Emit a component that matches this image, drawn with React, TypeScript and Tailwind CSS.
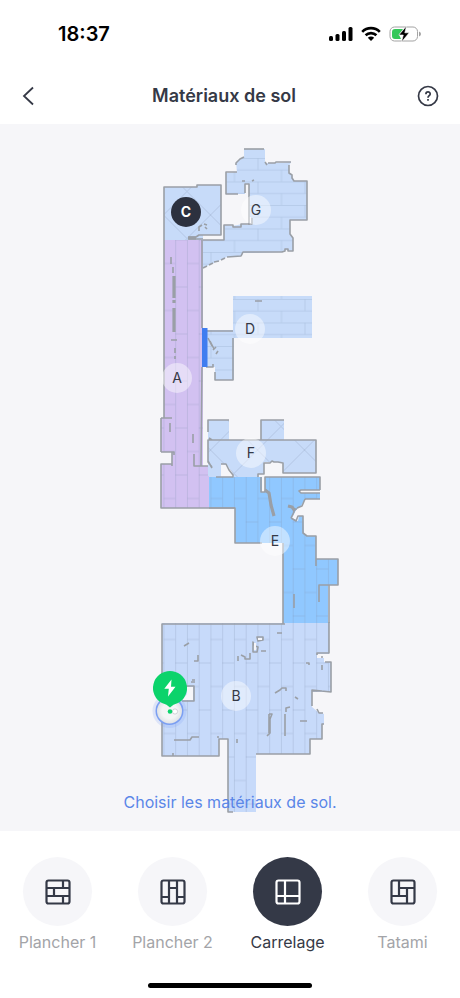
import React, { useState } from 'react';
import clsx from 'clsx';

const MAP = { top: 124, width: 460, height: 707 };

const rooms = [
  { id: 'A', x: 177, y: 378 },
  { id: 'B', x: 236, y: 696 },
  { id: 'C', x: 186, y: 212 },
  { id: 'D', x: 250, y: 329 },
  { id: 'E', x: 275, y: 541 },
  { id: 'F', x: 251, y: 453 },
  { id: 'G', x: 256, y: 210 },
];

const areas = [
  {
    id: 'G',
    color: '#c7dbf9',
    pattern: 'url(#rows)',
    d: 'M244 149H265V163L275 163L291 162L289 166V173L292 175L294 181H307V220H290V234L293 238V251L286 250L282 252L243 253L242 256L227 257L218 261L207 266L203 268V240H224V225L233 226L242 224L251 225V217H249V184H245V194H226V173L237 172L236 162L244 157Z',
  },
  {
    id: 'C',
    color: '#c7dbf9',
    pattern: 'url(#diamonds)',
    d: 'M164 187H197V185H221V235H203V240H164Z',
  },
  {
    id: 'D',
    color: '#c7dbf9',
    pattern: 'url(#rows)',
    d: 'M233 296H312V338H234V380H215V367H205V330H233Z',
  },
  {
    id: 'F',
    color: '#c7dbf9',
    pattern: 'url(#diamonds)',
    d: 'M208 420H229V440H261V420H284V440H316V473H283V462H264V474H258V477H234L232 472L227 465L221 464V477H208V440Z',
  },
  {
    id: 'A',
    color: '#d2c1f1',
    pattern: 'url(#columns)',
    d: 'M164 240H203V466H208V476H209V508H161V464H172V452H161V418H164Z',
  },
  {
    id: 'E',
    color: '#90c8ff',
    pattern: 'url(#columns)',
    d: 'M209 477H262V492H265V477H320V490H300V493H320V499H305L301 506L296 510L292 518L298 521L299 516H303L304 533L307 536H316V559H338V585H328V623H283V543H235V508H209Z',
  },
  {
    id: 'B',
    color: '#c7dafa',
    pattern: 'url(#columns)',
    d: 'M162 623H329V654H317V658H324V662H331V692H312V707L318 712L324 714V724H322V739H310V754H256V812H228V739H219V756H162Z',
  },
];

const walls = [
  // G
  'M244 149H264',
  'M265 162L267 165M268 163L275 163L276 162H291M289 165V173L292 175V178L294 181H307V220H290V234L293 238V251H288V249H285V251L282 252H243L241 256L227 257M225 258L221 260M219 261L214 262M213 263L209 265M207 266L203 268',
  'M244 157L240 159L236 163V165M237 172H226V194H238M245 193V184H249V225M242 181H245M252 181L254 180',
  'M203 240H224V225H233V227H241V224H252V218',
  // C
  'M164 240V187H197V185H221V235H199L196 237H189V239H203',
  'M199 231V227L202 225M204 224L207 225M205 227L207 229',
  // A
  'M164 240V418M161 418H172M161 418V452M161 452H174V455M172 452V466M172 464H161V508H235',
  'M202 240V328M202 367L201 466H208M194 454V466H208M170 423V432M193 434V443',
  'M171 257V264M173 267V273M171 340H177M175 348V353M175 356V359',
  // D
  'M207 331H233M233 338V380H215V372M206 367H213V364M208 338L212 346M210 341L214 349M213 350L216 347M216 354L218 351M255 301H262',
  // F
  'M208 432V420H229M209 438L212 440M284 420H261V440M212 467L208 462V440H316V473H283V463L278 462H274L272 461L270 463H264V474H258V477M208 461L212 468M221 464H226L229 470L233 475V477H216',
  // E
  'M261 477V492H265V477H320V490M320 490H301L299 491L301 493H320M320 499H305M305 499L302 506L297 508M297 509H294V512L291 518M291 518L296 521L298 516H303V533L307 536H316V566M316 559H338V585H319V602M329 585V623',
  'M209 508H235V543H262M283 543V624M294 594V608',
  // B
  'M162 688V624H285M329 622V653H317V655M325 662H331V692L312 690V706M312 691H322M317 709L319 713H323M324 714M324 724H322V739H310V754H256M323 657H321M322 665V670',
  'M162 722V756H219V739H228V812H233M217 737H219',
  'M186 686H194V701H182M198 655V661H194M184 646L189 643M257 637H263V640L258 641ZM253 642V652H257L258 647L255 646ZM261 651H266M238 656V661M241 655L245 657V659H250V653M277 633H282M306 663H309V665',
  'M275 693L280 690L282 688H286V691M295 697L298 699M286 712V708L290 707M269 714H272L270 719V733L267 736M269 714V733M285 714V736M300 721H307M174 740H190L192 737H199M237 739V743M173 753V756M191 682H195M192 680H195',
];

const thickWalls = [
  'M174 276V298M174 300V303M174 308V332',
  'M265 490L269 493L271 505L274 516',
  'M288 506L292 507L295 511',
  'M188 238H196',
];

const materials = [
  { name: 'Plancher 1', d: 'M2 9H24M2 17H24M18 2V9M9 9V17M18 17V24' },
  { name: 'Plancher 2', d: 'M9 2V24M17 2V24M2 18H9M9 9H17M17 18H24' },
  { name: 'Carrelage', d: 'M10 2V24M2 17H24' },
  { name: 'Tatami', d: 'M9 2V17M9 9H24M2 17H17M17 9V24' },
];

const StatusBar = () => (
  <div className="h-[68px] pl-[58px] pr-[38px] flex items-center justify-between">
    <span className="text-xl leading-6 font-semibold text-black">18:37</span>
    <div className="flex items-center gap-2">
      <svg width="24" height="16" viewBox="0 0 24 16" fill="#000">
        <rect x="0" y="10" width="4" height="5" rx="1.5" />
        <rect x="6.5" y="8" width="4" height="7" rx="1.5" />
        <rect x="13" y="5" width="4" height="10" rx="1.5" />
        <rect x="19.5" y="1" width="4" height="14" rx="1.5" />
      </svg>
      <svg width="20" height="16" viewBox="0 0 20 16" fill="none" stroke="#000" strokeWidth="2.6">
        <path d="M1.2 5.8C6 .9 14 .9 18.8 5.8" />
        <path d="M4.6 9.3C7.6 6.4 12.4 6.4 15.4 9.3" />
        <path d="M10 15L6.8 11.8C8.6 10.2 11.4 10.2 13.2 11.8Z" fill="#000" stroke="none" />
      </svg>
      <svg width="33" height="16" viewBox="0 0 33 16">
        <rect x="1" y="1" width="27.5" height="14" rx="4.5" fill="none" stroke="#a3a3a3" />
        <path d="M6 3H14L10 8.6L12 13H6Q3 13 3 10V6Q3 3 6 3Z" fill="#34c759" />
        <path d="M30 5.5Q32 6.3 32 8Q32 9.7 30 10.5Z" fill="#a3a3a3" />
        <path d="M17.5 0L9.8 9H14.3L12.5 16L20.2 6.8H15.8Z" fill="#000" stroke="#fff" strokeWidth=".6" />
      </svg>
    </div>
  </div>
);

const Header = () => (
  <header className="h-14 pl-4 pr-5 grid grid-cols-[24px_1fr_32px] items-center text-[#353946]">
    <button type="button" aria-label="Retour" className="size-6 flex items-center justify-center cursor-pointer">
      <svg width="24" height="24" viewBox="0 0 24 24" fill="none" stroke="currentColor" strokeWidth="1.8">
        <path d="M17 3.5L8 12L17 20.5" />
      </svg>
    </button>
    <h1 className="text-center text-lg leading-6 font-semibold">Matériaux de sol</h1>
    <button
      type="button"
      aria-label="Aide"
      className="size-6 justify-self-end flex items-center justify-center cursor-pointer"
    >
      <svg width="24" height="24" viewBox="0 0 24 24" fill="none" stroke="currentColor" strokeWidth="1.7">
        <circle cx="12" cy="12" r="9.5" />
        <path d="M9.9 10.2C9.9 7.2 14.2 7.3 14.2 10C14.2 11.6 12 11.8 12 13.7" />
        <path d="M12 15V16.7" />
      </svg>
    </button>
  </header>
);

const FloorPlan = () => (
  <svg className="block w-full h-auto" viewBox={`0 ${MAP.top} ${MAP.width} ${MAP.height}`} fill="none">
    <defs>
      <pattern id="rows" x="257.5" y="158" width="47" height="23.5" patternUnits="userSpaceOnUse">
        <path d="M0 .5H47M0 12H47M.5 0V12M24 12V23.5" stroke="#adc1e0" strokeWidth=".6" />
      </pattern>
      <pattern id="columns" x="175.2" y="286.5" width="23.5" height="47" patternUnits="userSpaceOnUse">
        <path d="M.5 0V47M12.2 0V47M0 .5H12M12 24H23.5" stroke="#7f90b0" strokeOpacity=".42" strokeWidth=".6" />
      </pattern>
      <pattern id="diamonds" x="304.5" y="450" width="47" height="47" patternUnits="userSpaceOnUse">
        <path d="M0 0L47 47M47 0L0 47" stroke="#a9bcd9" strokeWidth=".7" />
      </pattern>
      <radialGradient id="robot">
        <stop offset=".6" stopColor="#f4f5f6" />
        <stop offset="1" stopColor="#dfe2e6" />
      </radialGradient>
    </defs>

    {areas.map((area) => (
      <g key={area.id}>
        <path d={area.d} fill={area.color} />
        <path d={area.d} fill={area.pattern} />
      </g>
    ))}

    <g stroke="#9a9fa6" strokeLinejoin="round">
      {walls.map((d) => (
        <path key={d} d={d} strokeWidth="1.6" />
      ))}
      {thickWalls.map((d) => (
        <path key={d} d={d} strokeWidth="3.2" />
      ))}
    </g>

    {/* free space hidden behind furniture */}
    <path d="M187 687H193V700H182L187 694Z" fill="#f6f6f9" />
    <path d="M254 643H256V650H254Z" fill="#f6f6f9" />
    <path d="M258 638H262V640H258Z" fill="#f6f6f9" />

    {/* doorway */}
    <rect x="202" y="328" width="5.5" height="39" fill="#3f7df0" />
  </svg>
);

const Dock = () => (
  <svg className="block w-full h-auto" viewBox="150 666 40 64" fill="none">
    <circle cx="169.5" cy="711" r="17" fill="#7da2f5" fillOpacity=".2" />
    <circle cx="169.5" cy="711" r="14" fill="#7b9ff2" />
    <circle cx="169.5" cy="711" r="12.5" fill="url(#robot)" />
    <circle cx="175" cy="711.5" r="2.6" fill="#fff" stroke="#c5c9ce" strokeWidth=".8" />
    <path d="M170 671A17 17 0 0 1 178 703Q173 704 170 707.5Q167 704 162 703A17 17 0 0 1 170 671Z" fill="#0bd36b" />
    <circle cx="170" cy="711.5" r="2.3" fill="#0bd36b" />
    <path d="M171.5 679.5L164.3 688.7H168.8L168 696.5L175.5 686.8H171Z" fill="#fff" />
  </svg>
);

const RoomMap = () => {
  const [room, setRoom] = useState('C');

  return (
    <main className="relative w-full bg-[#f6f6f9]">
      <FloorPlan />
      <div
        className="absolute w-10 -translate-x-1/2 -translate-y-1/2"
        style={{
          left: `${(170 / MAP.width) * 100}%`,
          top: `${((698 - MAP.top) / MAP.height) * 100}%`,
        }}
      >
        <Dock />
      </div>
      {rooms.map(({ id, x, y }) => (
        <button
          key={id}
          type="button"
          aria-pressed={room === id}
          onClick={() => setRoom(id)}
          className={clsx(
            'absolute size-[30px] rounded-full -translate-x-1/2 -translate-y-1/2 flex items-center justify-center text-sm leading-5 cursor-pointer',
            room === id ? 'bg-[#2c313f] text-white font-bold' : 'bg-white/45 text-[#353946]'
          )}
          style={{
            left: `${(x / MAP.width) * 100}%`,
            top: `${((y - MAP.top) / MAP.height) * 100}%`,
          }}
        >
          {id}
        </button>
      ))}
      <p className="absolute inset-x-0 bottom-[17px] text-center text-base leading-6 text-[#5a86e8]">
        Choisir les matériaux de sol.
      </p>
    </main>
  );
};

const MaterialPicker = () => {
  const [selected, setSelected] = useState('Carrelage');

  return (
    <div className="pt-[26px] grid grid-cols-4">
      {materials.map(({ name, d }) => {
        const active = selected === name;
        return (
          <button
            key={name}
            type="button"
            aria-pressed={active}
            onClick={() => setSelected(name)}
            className="flex flex-col items-center gap-1 cursor-pointer"
          >
            <span
              className={clsx(
                'size-[69px] rounded-full flex items-center justify-center',
                active ? 'bg-[#343947] text-white' : 'bg-[#f6f6f9] text-[#343947]'
              )}
            >
              <svg width="26" height="26" viewBox="0 0 26 26" fill="none" stroke="currentColor" strokeWidth="2.2">
                <rect x="1.5" y="1.5" width="23" height="23" rx="2" />
                <path d={d} />
              </svg>
            </span>
            <span className={clsx('text-base leading-6 whitespace-nowrap', active ? 'text-[#353946]' : 'text-[#a3a4a8]')}>
              {name}
            </span>
          </button>
        );
      })}
    </div>
  );
};

const App = () => {
  return (
    <div className="min-h-screen flex flex-col bg-white font-[Inter,'Liberation_Sans',sans-serif]">
      <StatusBar />
      <Header />
      <RoomMap />
      <MaterialPicker />
      <div className="mt-auto pb-[10px] flex justify-center">
        <div className="w-[164px] h-[5px] rounded-full bg-black" />
      </div>
    </div>
  );
};

export default App;
